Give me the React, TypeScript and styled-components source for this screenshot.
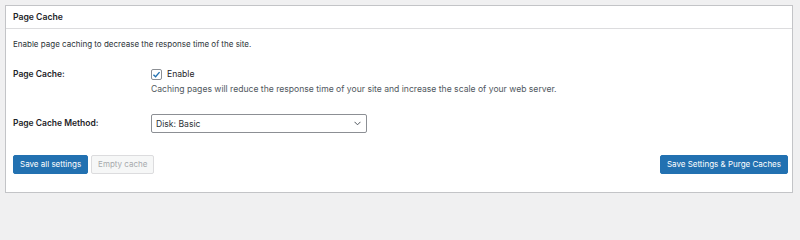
import React from 'react';
import styled, {createGlobalStyle} from 'styled-components';

const GlobalStyle = createGlobalStyle`
  html, body {
    margin: 0;
    padding: 0;
    background: #f0f0f1;
  }

  body {
    font-family: Inter, "Liberation Sans", Arial, sans-serif;
    font-size: 8.6px;
    color: #1d2327;
  }
`

const Page = styled.div`
  padding: 5px 7px 7px 5px;
`

const Panel = styled.div`
  background: #fff;
  border: 1px solid #c3c4c7;
`

const PanelHeader = styled.h3`
  margin: 0;
  height: 22px;
  line-height: 22px;
  padding-left: 7px;
  font-size: 8.65px;
  font-weight: 600;
  border-bottom: 1px solid #dcdcde;
`

const PanelBody = styled.div`
  padding: 8px 4px 18px 7px;
`

const Intro = styled.p`
  margin: 0;
  font-size: 8px;
  line-height: 14px;
  color: #2c3338;
`

const FormRow = styled.div<{ $top: number }>`
  display: grid;
  grid-template-columns: 138px 1fr;
  align-items: start;
  margin-top: ${p => p.$top}px;
`

const Label = styled.div<{ $lineHeight: number }>`
  font-size: 8.5px;
  font-weight: 600;
  line-height: ${p => p.$lineHeight}px;
`

const CheckLine = styled.label`
  display: flex;
  align-items: center;
  gap: 5px;
  line-height: 14px;
`

const CheckBox = styled.span`
  display: inline-flex;
  align-items: center;
  justify-content: center;
  width: 9px;
  height: 9px;
  border: 1px solid #8c8f94;
  border-radius: 2px;
  background: #fff;
`

const Description = styled.div`
  line-height: 14px;
  color: #50575e;
  margin-top: 1px;
`

const SelectWrap = styled.div`
  position: relative;
  width: 216px;
`

const Select = styled.select`
  appearance: none;
  width: 100%;
  height: 19px;
  margin: 0;
  padding: 0 20px 0 4px;
  font: inherit;
  color: #2c3338;
  background: #fff;
  border: 1px solid #8c8f94;
  border-radius: 2px;
  outline: none;
`

const Chevron = styled.svg`
  position: absolute;
  right: 6px;
  top: 7px;
  pointer-events: none;
`

const Actions = styled.div`
  display: flex;
  align-items: center;
  margin-top: 22px;
`

const ButtonGroup = styled.div`
  display: flex;
  gap: 3px;
`

const Spacer = styled.div`
  flex: 1;
`

const Button = styled.button<{ $primary?: boolean }>`
  height: 19px;
  padding: 0 6px;
  font: inherit;
  font-size: 8px;
  line-height: 17px;
  border-radius: 2px;
  cursor: pointer;
  border: 1px solid ${p => p.$primary ? '#2271b1' : '#dcdcde'};
  background: ${p => p.$primary ? '#2271b1' : '#f6f7f7'};
  color: ${p => p.$primary ? '#fff' : '#a7aaad'};
`

const App: React.FC = () => {
    return (
        <>
            <GlobalStyle/>
            <Page>
                <Panel>
                    <PanelHeader>Page Cache</PanelHeader>
                    <PanelBody>
                        <Intro>Enable page caching to decrease the response time of the site.</Intro>

                        <FormRow $top={16}>
                            <Label $lineHeight={14}>Page Cache:</Label>
                            <div>
                                <CheckLine>
                                    <CheckBox>
                                        <svg width="9" height="9" viewBox="0 0 10 10">
                                            <path d="M1.6 5.2 L4 7.5 L8.4 2.3" fill="none" stroke="#2271b1" strokeWidth="1.5"/>
                                        </svg>
                                    </CheckBox>
                                    Enable
                                </CheckLine>
                                <Description>
                                    Caching pages will reduce the response time of your site and increase the scale of your web server.
                                </Description>
                            </div>
                        </FormRow>

                        <FormRow $top={18}>
                            <Label $lineHeight={19}>Page Cache Method:</Label>
                            <SelectWrap>
                                <Select defaultValue="disk_basic">
                                    <option value="disk_basic">Disk: Basic</option>
                                    <option value="disk_enhanced">Disk: Enhanced</option>
                                </Select>
                                <Chevron width="7" height="5" viewBox="0 0 7 5">
                                    <path d="M0.5 0.8 L3.5 3.8 L6.5 0.8" fill="none" stroke="#50575e" strokeWidth="1"/>
                                </Chevron>
                            </SelectWrap>
                        </FormRow>

                        <Actions>
                            <ButtonGroup>
                                <Button $primary>Save all settings</Button>
                                <Button disabled>Empty cache</Button>
                            </ButtonGroup>
                            <Spacer/>
                            <Button $primary>Save Settings &amp; Purge Caches</Button>
                        </Actions>
                    </PanelBody>
                </Panel>
            </Page>
        </>
    )
}

export default App
